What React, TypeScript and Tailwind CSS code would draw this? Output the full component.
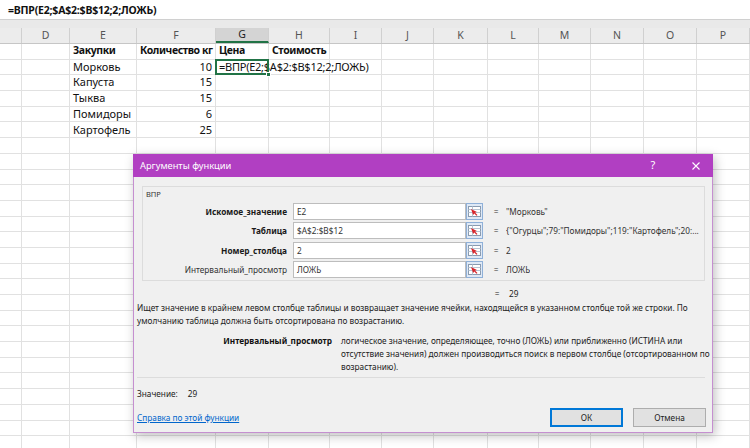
import React from "react";

const COLS = [22, 48, 67, 79, 53, 61, 52, 52, 54, 51, 52, 53, 53, 53];
const LETTERS = ["", "D", "E", "F", "G", "H", "I", "J", "K", "L", "M", "N", "O", "P"];

type Cell = { t: string; bold?: boolean; right?: boolean };
const DATA: Record<number, Record<number, Cell>> = {
  0: {
    2: { t: "Закупки", bold: true },
    3: { t: "Количество кг", bold: true },
    4: { t: "Цена", bold: true },
    5: { t: "Стоимость", bold: true },
  },
  1: { 2: { t: "Морковь" }, 3: { t: "10", right: true } },
  2: { 2: { t: "Капуста" }, 3: { t: "15", right: true } },
  3: { 2: { t: "Тыква" }, 3: { t: "15", right: true } },
  4: { 2: { t: "Помидоры" }, 3: { t: "6", right: true } },
  5: { 2: { t: "Картофель" }, 3: { t: "25", right: true } },
};

const ROWS = 26;

function RefButton() {
  return (
    <div className="w-[17px] h-[17px] shrink-0 flex items-center justify-center border border-[#8fb0d8] bg-[#dfe9f6]">
      <svg width="13" height="11" viewBox="0 0 13 11">
        <rect x="0.5" y="0.5" width="12" height="10" fill="#ffffff" stroke="#8a9bb0" />
        <line x1="0.5" y1="3.5" x2="12.5" y2="3.5" stroke="#b8c4d2" />
        <line x1="0.5" y1="6.5" x2="12.5" y2="6.5" stroke="#b8c4d2" />
        <line x1="4.5" y1="0.5" x2="4.5" y2="10.5" stroke="#b8c4d2" />
        <path d="M3 3 L9 6 L7 6.6 L9.5 9 L8.5 9.8 L6.2 7.4 L5.2 9 Z" fill="#d9262c" />
      </svg>
    </div>
  );
}

function ArgRow({ label, bold, value, result }: { label: string; bold?: boolean; value: string; result: string }) {
  return (
    <div className="flex items-center h-[19.3px]">
      <div className={`w-[144px] shrink-0 text-right ${bold ? "font-bold text-[#1a1a1a]" : "text-[#333]"}`}>{label}</div>
      <div className="ml-[6px] w-[173px] h-[17px] shrink-0 bg-white border border-[#bdbdbd] flex items-center pl-[3px] text-[#333]">
        {value}
      </div>
      <RefButton />
      <div className="w-[20px] ml-[3px] shrink-0 text-center text-[#333]">=</div>
      <div className="whitespace-nowrap overflow-hidden text-[#333]">{result}</div>
    </div>
  );
}

export default function App() {
  return (
    <div
      className="w-[750px] h-[448px] relative overflow-hidden bg-white"
      style={{ fontFamily: '"Noto Sans", "Open Sans", sans-serif' }}
    >
      {/* formula bar */}
      <div className="h-[19px] flex items-center pt-[3px] pl-[8px] bg-white text-[10.5px] tracking-[-0.2px] font-bold text-[#111]">
        =ВПР(E2;$A$2:$B$12;2;ЛОЖЬ)
      </div>
      <div className="h-[1px] bg-[#d0d0d0]" />
      <div className="h-[8px] bg-[#e9e9e9]" />
      {/* column header */}
      <div className="flex h-[16px] bg-[#ececec] border-b border-[#c6c6c6]">
        {COLS.map((w, i) => (
          <div
            key={i}
            style={{ width: w }}
            className={`shrink-0 flex items-center justify-center text-[10.5px] border-r border-[#d0d0d0] ${
              i === 4 ? "bg-[#d4d4d4] text-[#222] border-b-2 border-b-[#217346]" : "text-[#555]"
            }`}
          >
            {LETTERS[i]}
          </div>
        ))}
      </div>
      {/* grid */}
      <div className="flex flex-col text-[11px] text-[#111]">
        {Array.from({ length: ROWS }).map((_, r) => (
          <div key={r} className="flex h-[15.7px] shrink-0">
            {COLS.map((w, c) => {
              const cell = DATA[r]?.[c];
              const active = r === 1 && c === 4;
              return (
                <div
                  key={c}
                  style={{ width: w }}
                  className={`shrink-0 relative border-r border-b border-[#e1e1e1] flex items-center ${
                    cell?.right ? "justify-end pr-[3px]" : "pl-[3px]"
                  }`}
                >
                  {cell && (
                    <span
                      className={`whitespace-nowrap ${cell.bold ? "font-bold text-[10.5px] tracking-[-0.4px]" : ""}`}
                    >
                      {cell.t}
                    </span>
                  )}
                  {active && (
                    <>
                      <span className="absolute left-[3px] top-0 h-full flex items-center whitespace-nowrap z-10 tracking-[-0.25px]">
                        =ВПР(E2;$A$2:$B$12;2;ЛОЖЬ)
                      </span>
                      <div className="absolute -left-[1px] -top-[1px] -right-[1px] -bottom-[1px] border-2 border-[#217346] z-20" />
                      <div className="absolute -right-[3px] -bottom-[3px] w-[5px] h-[5px] bg-[#217346] border border-white z-30" />
                    </>
                  )}
                </div>
              );
            })}
          </div>
        ))}
      </div>

      {/* dialog */}
      <div className="absolute left-[133px] top-[154px] w-[580px] h-[279px] flex flex-col shadow-[2px_3px_10px_rgba(0,0,0,0.25)] z-40">
        <div className="h-[23px] bg-[#b13fc2] flex items-center pl-[7px] text-white text-[9.3px]">
          <span className="flex-1">Аргументы функции</span>
          <span className="w-[12px] text-center text-[11px] mr-[32px]">?</span>
          <svg className="mr-[12px]" width="10" height="10" viewBox="0 0 10 10">
            <path d="M1.5 1.5 L8.5 8.5 M8.5 1.5 L1.5 8.5" stroke="#ffffff" strokeWidth="1.1" />
          </svg>
        </div>
        <div className="flex-1 flex flex-col bg-[#f0f0f0] border-x border-b border-[#c58fd0] text-[8.25px] text-[#222] leading-[13px]">
          {/* group box */}
          <div className="mt-[9px] ml-[8px] mr-[7px] h-[95px] border border-[#dcdcdc] flex flex-col">
            <div className="pl-[3px] pt-[1px] h-[15px] text-[7.5px] text-[#333]">ВПР</div>
            <div className="flex flex-col">
              <ArgRow label="Искомое_значение" bold value="E2" result={'"Морковь"'} />
              <ArgRow label="Таблица" bold value="$A$2:$B$12" result={'{"Огурцы";79:"Помидоры";119:"Картофель";20:...'} />
              <ArgRow label="Номер_столбца" bold value="2" result="2" />
              <ArgRow label="Интервальный_просмотр" value="ЛОЖЬ" result="ЛОЖЬ" />
            </div>
          </div>
          <div className="mt-[6px] h-[13px] flex">
            <div className="w-[353px] shrink-0" />
            <div className="w-[20px] text-center">=</div>
            <div className="ml-[2px]">29</div>
          </div>
          <div className="mt-[1px] pl-[3px]">
            <div className="whitespace-nowrap">
              Ищет значение в крайнем левом столбце таблицы и возвращает значение ячейки, находящейся в указанном столбце той же строки. По
            </div>
            <div className="whitespace-nowrap">умолчанию таблица должна быть отсортирована по возрастанию.</div>
          </div>
          <div className="mt-[7px] flex">
            <div className="w-[198px] shrink-0 text-right font-bold text-[#111]">Интервальный_просмотр</div>
            <div className="ml-[9px]">
              <div className="whitespace-nowrap">
                логическое значение, определяющее, точно (ЛОЖЬ) или приближенно (ИСТИНА или
              </div>
              <div className="whitespace-nowrap">
                отсутствие значения) должен производиться поиск в первом столбце (отсортированном по
              </div>
              <div className="whitespace-nowrap">возрастанию).</div>
            </div>
          </div>
          <div className="mt-[4px] ml-[3px] mr-[7px] h-[1px] bg-[#dcdcdc]" />
          <div className="mt-[9px] pl-[3px] flex">
            <span>Значение:</span>
            <span className="ml-[10px]">29</span>
          </div>
          <div className="mt-[8px] flex items-center h-[19px] pl-[3px] pr-[6px]">
            <span className="flex-1 text-[#0066cc] underline">Справка по этой функции</span>
            <button className="w-[73px] h-[19px] bg-[#e1e1e1] border-2 border-[#0078d7] text-[8.25px] text-[#222]">
              ОК
            </button>
            <button className="ml-[10px] w-[73px] h-[19px] bg-[#e1e1e1] border border-[#adadad] text-[8.25px] text-[#222]">
              Отмена
            </button>
          </div>
        </div>
      </div>
    </div>
  );
}
